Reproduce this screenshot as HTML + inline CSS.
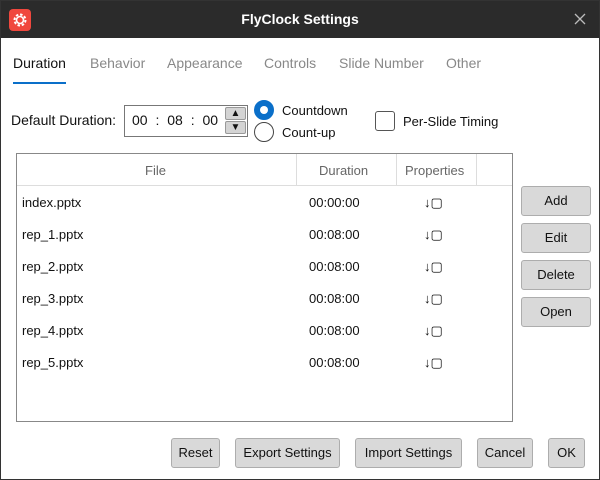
<!DOCTYPE html><html><head><style>
body{margin:0;width:600px;height:480px;overflow:hidden;font-family:"Liberation Sans",sans-serif;font-size:13px;color:#111;background:#fff;position:relative}
.frame{position:absolute;left:0;top:0;width:598px;height:478px;border:1px solid #333;z-index:5;pointer-events:none}
.tb{position:absolute;left:0;top:0;width:600px;height:38px;background:#2b2b2b;color:#fff}
.a{position:absolute}
.btn{position:absolute;background:#d9d9d9;border:1px solid #adadad;border-radius:3px;box-sizing:border-box;text-align:center;font-size:13px}
.tab{position:absolute;top:55px;color:#888;font-size:14px}
.row{position:absolute;left:22px;font-size:13px}
</style></head><body><div class="frame"></div>
<div class="tb">
<div class="a" style="left:9px;top:9px;width:22px;height:22px;background:#f0483e;border-radius:4px"><svg width="22" height="22" viewBox="0 0 22 22"><circle cx="11" cy="11" r="5.5" fill="none" stroke="#fff" stroke-width="2" stroke-dasharray="2.5 1.8"/><circle cx="11" cy="11" r="3.5" fill="none" stroke="#fff" stroke-width="1.6"/></svg></div>
<div class="a" style="left:0;width:600px;top:11px;text-align:center;font-weight:bold;font-size:14px">FlyClock Settings</div>
<svg class="a" style="left:574px;top:13px" width="12" height="12"><path d="M1 1L11 11M11 1L1 11" stroke="#bbb" stroke-width="1.3"/></svg>
</div>
<div class="tab" style="left:13px;color:#111">Duration</div>
<div class="a" style="left:13px;top:82px;width:53px;height:2px;background:#0a6fc9"></div>
<div class="tab" style="left:90px">Behavior</div>
<div class="tab" style="left:167px">Appearance</div>
<div class="tab" style="left:264px">Controls</div>
<div class="tab" style="left:339px">Slide Number</div>
<div class="tab" style="left:446px">Other</div>
<div class="a" style="left:11px;top:112px;font-size:14px">Default Duration:</div>
<div class="a" style="left:124px;top:105px;width:124px;height:32px;border:1px solid #777;box-sizing:border-box"></div>
<div class="a" style="left:132px;top:112px;font-size:14px;word-spacing:4px">00 : 08 : 00</div>
<div class="a" style="left:225px;top:107px;width:21px;height:13px;background:#d4d4d4;border:1px solid #999;border-radius:2px;box-sizing:border-box;font-size:10px;text-align:center;line-height:12px">▲</div>
<div class="a" style="left:225px;top:121px;width:21px;height:13px;background:#d4d4d4;border:1px solid #999;border-radius:2px;box-sizing:border-box;font-size:10px;text-align:center;line-height:12px">▼</div>
<div class="a" style="left:254px;top:100px;width:20px;height:20px;border-radius:50%;background:#0a6fc9;box-sizing:border-box;border:6px solid #0a6fc9"><div style="width:8px;height:8px;background:#fff;border-radius:50%"></div></div>
<div class="a" style="left:254px;top:122px;width:20px;height:20px;border-radius:50%;border:1px solid #444;box-sizing:border-box"></div>
<div class="a" style="left:282px;top:103px">Countdown</div>
<div class="a" style="left:282px;top:125px">Count-up</div>
<div class="a" style="left:375px;top:111px;width:20px;height:20px;border:1px solid #555;border-radius:3px;box-sizing:border-box"></div>
<div class="a" style="left:403px;top:114px">Per-Slide Timing</div>
<div class="a" style="left:16px;top:153px;width:497px;height:269px;border:1px solid #888;box-sizing:border-box"></div>
<div class="a" style="left:17px;top:185px;width:495px;height:1px;background:#ddd"></div>
<div class="a" style="left:296px;top:154px;width:1px;height:31px;background:#ddd"></div>
<div class="a" style="left:396px;top:154px;width:1px;height:31px;background:#ddd"></div>
<div class="a" style="left:476px;top:154px;width:1px;height:31px;background:#ddd"></div>
<div class="a" style="left:145px;top:163px;color:#666">File</div>
<div class="a" style="left:319px;top:163px;color:#666">Duration</div>
<div class="a" style="left:405px;top:163px;color:#666">Properties</div>
<div class="row" style="top:195px">index.pptx</div><div class="a" style="left:309px;top:195px">00:00:00</div><div class="a" style="left:424px;top:195px">↓▢</div>
<div class="row" style="top:227px">rep_1.pptx</div><div class="a" style="left:309px;top:227px">00:08:00</div><div class="a" style="left:424px;top:227px">↓▢</div>
<div class="row" style="top:259px">rep_2.pptx</div><div class="a" style="left:309px;top:259px">00:08:00</div><div class="a" style="left:424px;top:259px">↓▢</div>
<div class="row" style="top:291px">rep_3.pptx</div><div class="a" style="left:309px;top:291px">00:08:00</div><div class="a" style="left:424px;top:291px">↓▢</div>
<div class="row" style="top:323px">rep_4.pptx</div><div class="a" style="left:309px;top:323px">00:08:00</div><div class="a" style="left:424px;top:323px">↓▢</div>
<div class="row" style="top:355px">rep_5.pptx</div><div class="a" style="left:309px;top:355px">00:08:00</div><div class="a" style="left:424px;top:355px">↓▢</div>
<div class="btn" style="left:521px;top:186px;width:70px;height:30px;line-height:28px">Add</div>
<div class="btn" style="left:521px;top:223px;width:70px;height:30px;line-height:28px">Edit</div>
<div class="btn" style="left:521px;top:260px;width:70px;height:30px;line-height:28px">Delete</div>
<div class="btn" style="left:521px;top:297px;width:70px;height:30px;line-height:28px">Open</div>
<div class="btn" style="left:171px;top:438px;width:49px;height:30px;line-height:28px">Reset</div>
<div class="btn" style="left:235px;top:438px;width:105px;height:30px;line-height:28px">Export Settings</div>
<div class="btn" style="left:355px;top:438px;width:107px;height:30px;line-height:28px">Import Settings</div>
<div class="btn" style="left:477px;top:438px;width:56px;height:30px;line-height:28px">Cancel</div>
<div class="btn" style="left:548px;top:438px;width:37px;height:30px;line-height:28px">OK</div>
</body></html>
